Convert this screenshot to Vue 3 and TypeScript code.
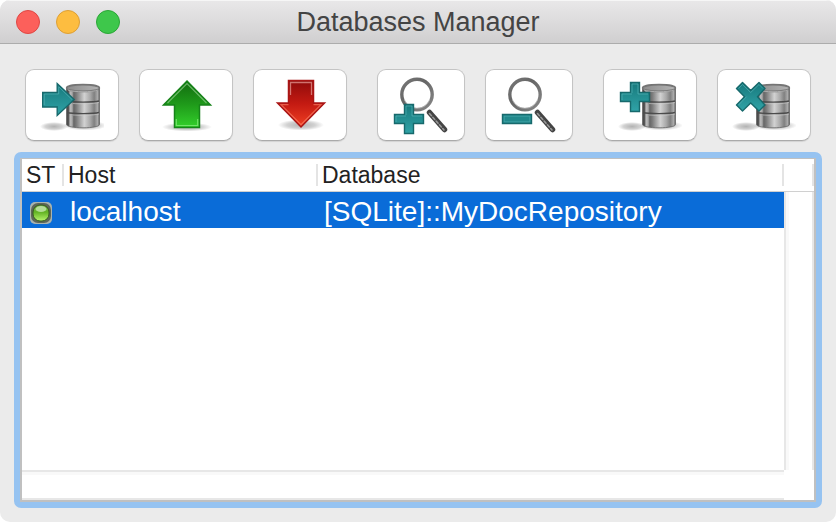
<script setup lang="ts">
import { ref } from 'vue'

type Glyph = 'connect' | 'up' | 'down' | 'zoom-in' | 'zoom-out' | 'add' | 'remove'

interface Tool {
  glyph: Glyph
  label: string
}

interface Connection {
  host: string
  database: string
}

const groups: Tool[][] = [
  [
    { glyph: 'connect', label: 'Connect' },
    { glyph: 'up', label: 'Move up' },
    { glyph: 'down', label: 'Move down' },
  ],
  [
    { glyph: 'zoom-in', label: 'Zoom in' },
    { glyph: 'zoom-out', label: 'Zoom out' },
  ],
  [
    { glyph: 'add', label: 'Add database' },
    { glyph: 'remove', label: 'Remove database' },
  ],
]

const connections: Connection[] = [{ host: 'localhost', database: '[SQLite]::MyDocRepository' }]
const selected = ref(0)

const hasCylinder = (g: Glyph) => g === 'connect' || g === 'add' || g === 'remove'
const hasLens = (g: Glyph) => g === 'zoom-in' || g === 'zoom-out'
</script>

<template>
  <main class="window">
    <svg class="defs" width="0" height="0" aria-hidden="true">
      <defs>
        <linearGradient id="steel" x1="0" x2="1" y1="0" y2="0">
          <stop offset="0" stop-color="#444" />
          <stop offset="0.06" stop-color="#555" />
          <stop offset="0.11" stop-color="#bbb" />
          <stop offset="0.17" stop-color="#aaa" />
          <stop offset="0.22" stop-color="#666" />
          <stop offset="0.3" stop-color="#7c7c7c" />
          <stop offset="0.54" stop-color="#d2d2d2" />
          <stop offset="0.72" stop-color="#a8a8a8" />
          <stop offset="0.84" stop-color="#808080" />
          <stop offset="0.94" stop-color="#aaa" />
          <stop offset="1" stop-color="#666" />
        </linearGradient>
        <linearGradient id="lid" x1="0" x2="1" y1="0" y2="0">
          <stop offset="0" stop-color="#8d8d8d" />
          <stop offset="1" stop-color="#b4b4b4" />
        </linearGradient>
        <linearGradient id="teal" x1="0" x2="0" y1="0" y2="1">
          <stop offset="0" stop-color="#17797c" />
          <stop offset="1" stop-color="#30a3a7" />
        </linearGradient>
        <linearGradient id="green" x1="0" x2="0" y1="0" y2="1">
          <stop offset="0" stop-color="#126b10" />
          <stop offset="0.5" stop-color="#1f9a1a" />
          <stop offset="1" stop-color="#33d02b" />
        </linearGradient>
        <linearGradient id="red" x1="0" x2="0" y1="0" y2="1">
          <stop offset="0" stop-color="#8f0b0b" />
          <stop offset="0.5" stop-color="#c41a12" />
          <stop offset="1" stop-color="#f04023" />
        </linearGradient>
        <linearGradient id="rim" x1="0" x2="1" y1="0" y2="1">
          <stop offset="0" stop-color="#777" />
          <stop offset="0.4" stop-color="#666" />
          <stop offset="1" stop-color="#888" />
        </linearGradient>
        <radialGradient id="shade">
          <stop offset="0" stop-color="#000" stop-opacity="0.3" />
          <stop offset="0.6" stop-color="#000" stop-opacity="0.18" />
          <stop offset="1" stop-color="#000" stop-opacity="0" />
        </radialGradient>
        <linearGradient id="led" x1="0" x2="0" y1="0" y2="1">
          <stop offset="0" stop-color="#6fae45" />
          <stop offset="0.45" stop-color="#63b324" />
          <stop offset="1" stop-color="#b8f56c" />
        </linearGradient>
      </defs>
    </svg>

    <header class="titlebar">
      <div class="lights">
        <button type="button" class="light close" aria-label="Close"></button>
        <button type="button" class="light minimize" aria-label="Minimize"></button>
        <button type="button" class="light maximize" aria-label="Zoom window"></button>
      </div>
      <h1>Databases Manager</h1>
    </header>

    <nav class="toolbar" aria-label="Database tools">
      <div v-for="(tools, i) in groups" :key="i" class="group">
        <button
          v-for="tool in tools"
          :key="tool.glyph"
          type="button"
          class="tool"
          :class="{ narrow: hasLens(tool.glyph) }"
          :aria-label="tool.label"
        >
          <svg width="64" height="64" viewBox="0 0 64 64" aria-hidden="true">
            <g v-if="hasCylinder(tool.glyph)">
              <ellipse cx="14" cy="53.5" rx="14" ry="4.5" fill="url(#shade)" />
              <g :transform="tool.glyph === 'connect' ? 'translate(2 0)' : undefined">
                <ellipse cx="43" cy="52.5" rx="22" ry="5" fill="url(#shade)" />
                <path d="M24.500 15V51.500C24.500 53.500 32 54.800 41 54.800S57.500 53.500 57.500 51.500V15Z" fill="url(#steel)" stroke="#666" stroke-width="0.8" />
                <path d="M25 28C30 29.500 52 29.500 57 28M25 39.500C30 41 52 41 57 39.500" fill="none" stroke="#4c4c4c" stroke-width="1.4" />
                <path d="M31 30.500C38 31 51 31 57 29.500M31 42C38 42.500 51 42.500 57 41" fill="none" stroke="#ccc" stroke-width="0.6" />
                <ellipse cx="41" cy="15" rx="16.4" ry="3.4" fill="url(#lid)" stroke="#757575" stroke-width="1.6" />
                <path d="M26 17C31 19.300 51 19.300 56 17" fill="none" stroke="#bbb" stroke-width="0.8" />
              </g>
            </g>

            <template v-if="tool.glyph === 'connect'">
              <path d="M2.700 19.500H17.200V10.500L34.200 26.500L17.200 42.500V34H2.700Z" fill="url(#teal)" stroke="#17696c" stroke-width="1.4" />
              <path d="M4.200 32V21H18.700V13.800L32 26.500" fill="none" stroke="#5bb8ba" stroke-opacity="0.6" />
            </template>

            <template v-if="tool.glyph === 'up'">
              <ellipse cx="33" cy="54" rx="25" ry="4.5" fill="url(#shade)" />
              <path d="M33 8L56.500 32H45.500V54.500H20.500V32H9.500Z" fill="url(#green)" stroke="#17831a" stroke-width="1.5" />
              <path d="M13.500 30L33 10.500L52.500 30" fill="none" stroke="#8fd08a" stroke-opacity="0.7" stroke-width="1.2" />
              <path d="M22.300 46V52.500H43.700V46" fill="none" stroke="#8df083" stroke-opacity="0.7" stroke-width="1.2" />
            </template>

            <template v-if="tool.glyph === 'down'">
              <ellipse cx="33" cy="52" rx="23" ry="5.5" fill="url(#shade)" />
              <path d="M20.500 7.500H45.500V30H56.500L33 54L9.500 30H20.500Z" fill="url(#red)" stroke="#a91414" stroke-width="1.5" />
              <path d="M22.500 22V9.500H43.500V22" fill="none" stroke="#e9a09a" stroke-opacity="0.7" stroke-width="1.3" />
              <path d="M20.500 31.700H13L33 51.700L53 31.700H45.500" fill="none" stroke="#ff8a70" stroke-opacity="0.6" stroke-width="1.2" />
            </template>

            <template v-if="hasLens(tool.glyph)">
              <path d="M40.500 39.500L55.500 56.500" stroke="#444" stroke-width="5.5" stroke-linecap="round" />
              <path d="M40.500 40.500L55 57" stroke="#999" stroke-width="1.6" stroke-linecap="round" stroke-dasharray="3 2" />
              <circle cx="28" cy="21.500" r="15.2" fill="#fff" stroke="url(#rim)" stroke-width="3.4" />
              <path d="M15.500 27A13.600 13.600 0 0 0 40.500 27" fill="none" stroke="#bbb" stroke-width="0.8" />
            </template>

            <template v-if="tool.glyph === 'zoom-in'">
              <path d="M15.500 31.500H24.500V41.500H34.500V50.500H24.500V60.500H15.500V50.500H5.500V41.500H15.500Z" fill="url(#teal)" stroke="#17696c" stroke-width="1.4" />
              <path d="M17 42V33H23V43H33M7 49V43H17" fill="none" stroke="#5bb8ba" stroke-opacity="0.6" />
            </template>
            <template v-if="tool.glyph === 'zoom-out'">
              <path d="M5.500 41.500H34.500V50.500H5.500Z" fill="#22898c" stroke="#17696c" stroke-width="1.4" />
              <path d="M7.200 43.200H32.800V48.800H7.200Z" fill="none" stroke="#5bb8ba" stroke-opacity="0.45" />
            </template>
            <template v-if="tool.glyph === 'add'">
              <path d="M12.500 9.500H21.500V19.500H31.500V28.500H21.500V38.500H12.500V28.500H2.500V19.500H12.500Z" fill="url(#teal)" stroke="#17696c" stroke-width="1.4" />
              <path d="M14 20V11H20V21H30M4 27V21H14" fill="none" stroke="#5bb8ba" stroke-opacity="0.6" />
            </template>
            <template v-if="tool.glyph === 'remove'">
              <path d="M10.500 9.500L18.700 17.500L27 9.500L33 15.500L25.500 23.700L33 32L27 38L18.700 30L10.500 38L4.500 32L12.500 23.700L4.500 15.500Z" fill="url(#teal)" stroke="#17696c" stroke-width="1.4" stroke-linejoin="round" />
              <path d="M6.500 15.500L10.500 11.500L18.700 19.500L27 11.500L31 15.500M6.500 32L14.500 23.700" fill="none" stroke="#5bb8ba" stroke-opacity="0.6" />
            </template>
          </svg>
        </button>
      </div>
    </nav>

    <section class="list">
      <div class="pane">
        <table>
          <colgroup>
            <col class="col-status" />
            <col class="col-host" />
            <col />
          </colgroup>
          <thead>
            <tr>
              <th scope="col"><span>ST</span></th>
              <th scope="col"><span>Host</span></th>
              <th scope="col"><span>Database</span></th>
            </tr>
          </thead>
          <tbody>
            <tr
              v-for="(c, i) in connections"
              :key="c.host"
              :class="{ selected: selected === i }"
              @click="selected = i"
            >
              <td class="status">
                <svg width="22" height="22" viewBox="0 0 22 22" role="img" aria-label="Connected">
                  <rect x="0" y="0" width="22" height="22" rx="5" fill="#a9b3ae" />
                  <rect x="1" y="1" width="20" height="20" rx="7" fill="#5d6658" />
                  <rect x="3" y="3" width="16" height="16" rx="7" fill="url(#led)" stroke="#35591f" />
                  <ellipse cx="11" cy="7" rx="5.5" ry="3" fill="#e8f8dc" opacity="0.6" />
                </svg>
              </td>
              <td>{{ c.host }}</td>
              <td>{{ c.database }}</td>
            </tr>
          </tbody>
        </table>
        <div class="corner"></div>
        <div class="track vertical"></div>
        <div class="track horizontal"></div>
      </div>
    </section>
  </main>
</template>

<style>
body {
  background: #fff;
}
</style>

<style scoped>
.window {
  box-sizing: border-box;
  min-height: 100vh;
  display: flex;
  flex-direction: column;
  overflow: hidden;
  border-radius: 10px;
  background: #ebebeb;
  color: #222;
  font-family: "Liberation Sans", Arial, sans-serif;
}

.defs {
  position: absolute;
}

.titlebar {
  box-sizing: border-box;
  height: 44px;
  display: grid;
  grid-template-columns: 1fr auto 1fr;
  align-items: center;
  padding: 1px 16px 0;
  border-bottom: 1px solid #acacac;
  background: linear-gradient(#e9e8e9, #d0cfd0);
  box-shadow: inset 0 1px #f6f6f6;
}

.lights {
  display: flex;
  gap: 16px;
}

.light {
  box-sizing: border-box;
  width: 24px;
  height: 24px;
  padding: 0;
  border: 1px solid;
  border-radius: 50%;
}

.close {
  background: #fc605b;
  border-color: #df4744;
}

.minimize {
  background: #fdbd40;
  border-color: #dd9f35;
}

.maximize {
  background: #3ec74b;
  border-color: #2ba637;
}

h1 {
  margin: 0;
  font-size: 27px;
  line-height: 32px;
  font-weight: 400;
  color: #444;
}

.toolbar {
  display: flex;
  justify-content: space-between;
  padding: 25px 25px 11px;
}

.group {
  display: flex;
  gap: 20px;
}

.tool {
  box-sizing: border-box;
  width: 94px;
  height: 72px;
  display: flex;
  align-items: center;
  justify-content: center;
  padding: 0;
  border: 1px solid #c4c4c4;
  border-bottom-color: #aaa;
  border-radius: 9px;
  background: #fff;
  box-shadow: 0 1px 1px rgba(0, 0, 0, 0.1);
}

.tool.narrow {
  width: 88px;
}

.tool svg {
  flex: none;
}

.list {
  flex: 1;
  display: flex;
  margin: 0 14px 14px;
  border: 6px solid #96c3f1;
  border-radius: 7px;
  background: #96c3f1;
}

.pane {
  flex: 1;
  display: grid;
  grid-template-columns: 1fr 30px;
  grid-template-rows: 33px 1fr 30px;
  border: 2px solid #c0c0c0;
  border-top-width: 1px;
  background: #fff;
}

table {
  grid-column: 1;
  grid-row: 1 / 3;
  align-self: start;
  width: 100%;
  table-layout: fixed;
  border-collapse: separate;
  border-spacing: 0;
}

.col-status {
  width: 42px;
}

.col-host {
  width: 254px;
}

th {
  height: 32px;
  padding: 0;
  border-bottom: 1px solid #d0d0d0;
  font-size: 23px;
  line-height: 22px;
  font-weight: 400;
  text-align: left;
}

th span {
  display: block;
  padding-left: 4px;
  border-right: 2px solid #e4e4e4;
}

td {
  height: 32px;
  padding: 4px 0 0 6px;
  font-size: 28px;
  line-height: 32px;
}

td.status {
  padding-left: 8px;
}

td.status svg {
  display: block;
  margin-top: 2px;
}

.selected {
  background: #0a6cd8;
  color: #fff;
}

.corner {
  grid-column: 2;
  grid-row: 1;
  display: flex;
  align-items: center;
  justify-content: flex-end;
  border-bottom: 1px solid #d0d0d0;
}

.corner::after {
  content: "";
  height: 22px;
  border-right: 2px solid #e4e4e4;
}

.track {
  background: #fff;
}

.vertical {
  grid-column: 2;
  grid-row: 2;
  border-left: 2px solid #e7e7e7;
  border-right: 2px solid #e7e7e7;
  box-shadow: inset 3px 0 #f9f9f9;
}

.horizontal {
  grid-column: 1;
  grid-row: 3;
  border-top: 2px solid #e7e7e7;
  border-bottom: 2px solid #e7e7e7;
  box-shadow: inset 0 3px #f9f9f9;
}
</style>
